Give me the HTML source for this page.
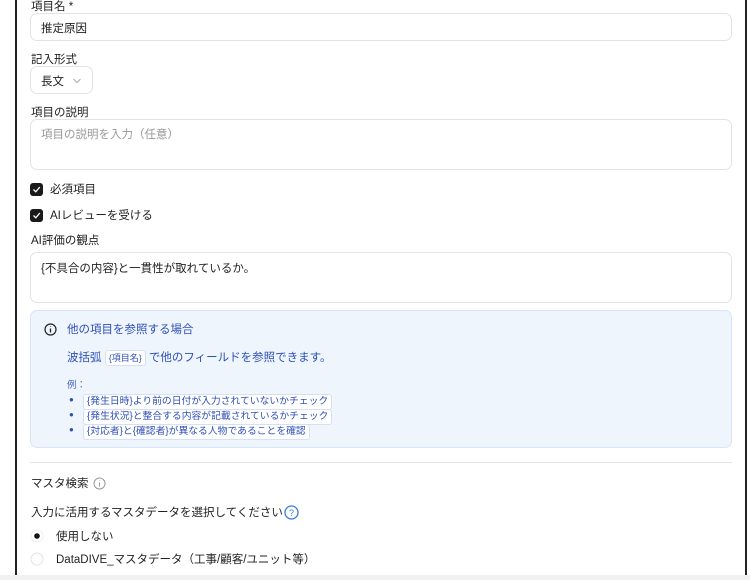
<!DOCTYPE html>
<html><head><meta charset="utf-8"><style>
*{box-sizing:border-box;margin:0;padding:0}
body{width:750px;height:580px;overflow:hidden;background:#fff;font-family:"Liberation Sans","Noto Sans CJK JP",sans-serif;color:#222;font-size:11.5px;position:relative}
.frame{position:absolute;left:15px;top:0;width:732px;height:575px;border-left:2px solid #222;border-right:2px solid #222}
.bot{position:absolute;left:0;top:575px;width:750px;height:5px;background:#f1f1f1}
.a{position:absolute}
.box{position:absolute;border:1px solid #e3e3e3;border-radius:7px;background:#fff}
.lbl{position:absolute;left:31px;font-size:11.5px;color:#222}
.cb{position:absolute;left:30px;width:13px;height:13px;background:#1a1a1a;border-radius:3px}
.cb svg{position:absolute;left:2px;top:2px}
.chip{display:inline-block;border:1px solid #d5e1f2;background:#fff;border-radius:3px;padding:0 3px;line-height:14px}
ul li{font-size:9.8px;color:#2f4fb8;list-style:none;position:relative;height:15px}
</style></head><body>
<div class="frame"></div>
<div class="bot"></div>
<div class="lbl" style="top:-2px">項目名 *</div>
<div class="box" style="left:30px;top:13px;width:702px;height:28px"><span class="a" style="left:10px;top:6px">推定原因</span></div>
<div class="lbl" style="top:51px">記入形式</div>
<div class="box" style="left:30px;top:66px;width:63px;height:28px"><span class="a" style="left:10px;top:6px">長文</span><svg class="a" style="left:42px;top:11px" width="8" height="6"><path d="M0.5 1L4 4.5 7.5 1" stroke="#aaa" fill="none"/></svg></div>
<div class="lbl" style="top:104px">項目の説明</div>
<div class="box" style="left:30px;top:119px;width:702px;height:51px"><span class="a" style="left:10px;top:6px;color:#999">項目の説明を入力（任意）</span></div>
<div class="cb" style="top:183px"><svg width="9" height="9"><path d="M1.5 4.5L3.8 6.8 7.8 2" stroke="#fff" stroke-width="1.3" fill="none"/></svg></div>
<div class="lbl" style="left:50px;top:181px">必須項目</div>
<div class="cb" style="top:209px"><svg width="9" height="9"><path d="M1.5 4.5L3.8 6.8 7.8 2" stroke="#fff" stroke-width="1.3" fill="none"/></svg></div>
<div class="lbl" style="left:50px;top:207px">AIレビューを受ける</div>
<div class="lbl" style="top:232px">AI評価の観点</div>
<div class="box" style="left:30px;top:252px;width:702px;height:51px"><span class="a" style="left:10px;top:7px">{不具合の内容}と一貫性が取れているか。</span></div>
<div class="box" style="left:30px;top:310px;width:702px;height:138px;background:#eef5fd;border-color:#d6e6f8">
 <svg class="a" style="left:13px;top:12px" width="13" height="13"><circle cx="6.5" cy="6.5" r="5.5" stroke="#222" stroke-width="1.2" fill="none"/><path d="M6.5 5.5v4M6.5 3.5v.5" stroke="#222" stroke-width="1.3"/></svg>
 <span class="a" style="left:36px;top:10px;color:#2f4fb8">他の項目を参照する場合</span>
 <span class="a" style="left:36px;top:38px;color:#2f4fb8">波括弧 <span class="chip" style="font-size:9px">{項目名}</span> で他のフィールドを参照できます。</span>
 <span class="a" style="left:36px;top:66px;font-size:9.5px;color:#4a66c0">例：</span>
 <ul class="a" style="left:38px;top:83px">
  <li><span style="position:absolute;left:0;top:1px;font-size:8px">●</span><span class="chip" style="margin-left:14px">{発生日時}より前の日付が入力されていないかチェック</span></li>
  <li><span style="position:absolute;left:0;top:1px;font-size:8px">●</span><span class="chip" style="margin-left:14px">{発生状況}と整合する内容が記載されているかチェック</span></li>
  <li><span style="position:absolute;left:0;top:1px;font-size:8px">●</span><span class="chip" style="margin-left:14px">{対応者}と{確認者}が異なる人物であることを確認</span></li>
 </ul>
</div>
<div class="a" style="left:30px;top:462px;width:702px;height:1px;background:#e6e6e6"></div>
<div class="lbl" style="top:475px">マスタ検索</div>
<svg class="a" style="left:93px;top:477px" width="13" height="13"><circle cx="6.5" cy="6.5" r="5.5" stroke="#999" fill="none"/><path d="M6.5 5.5v4M6.5 3.5v.5" stroke="#999"/></svg>
<div class="lbl" style="top:504px">入力に活用するマスタデータを選択してください</div>
<svg class="a" style="left:284px;top:505px" width="15" height="15"><circle cx="7.5" cy="7.5" r="6.5" stroke="#3b7be0" stroke-width="1.3" fill="none"/><text x="7.5" y="11" font-size="9" text-anchor="middle" fill="#3b7be0" font-family="Liberation Sans">?</text></svg>
<svg class="a" style="left:30px;top:529px" width="14" height="14"><circle cx="7" cy="7" r="6" fill="#fff" stroke="#eee"/><circle cx="7" cy="7" r="2.8" fill="#111"/></svg>
<div class="lbl" style="left:56px;top:528px">使用しない</div>
<svg class="a" style="left:30px;top:552px" width="14" height="14"><circle cx="7" cy="7" r="6" fill="#fff" stroke="#e3e3e3"/></svg>
<div class="lbl" style="left:56px;top:551px">DataDIVE_マスタデータ（工事/顧客/ユニット等）</div>
</body></html>
